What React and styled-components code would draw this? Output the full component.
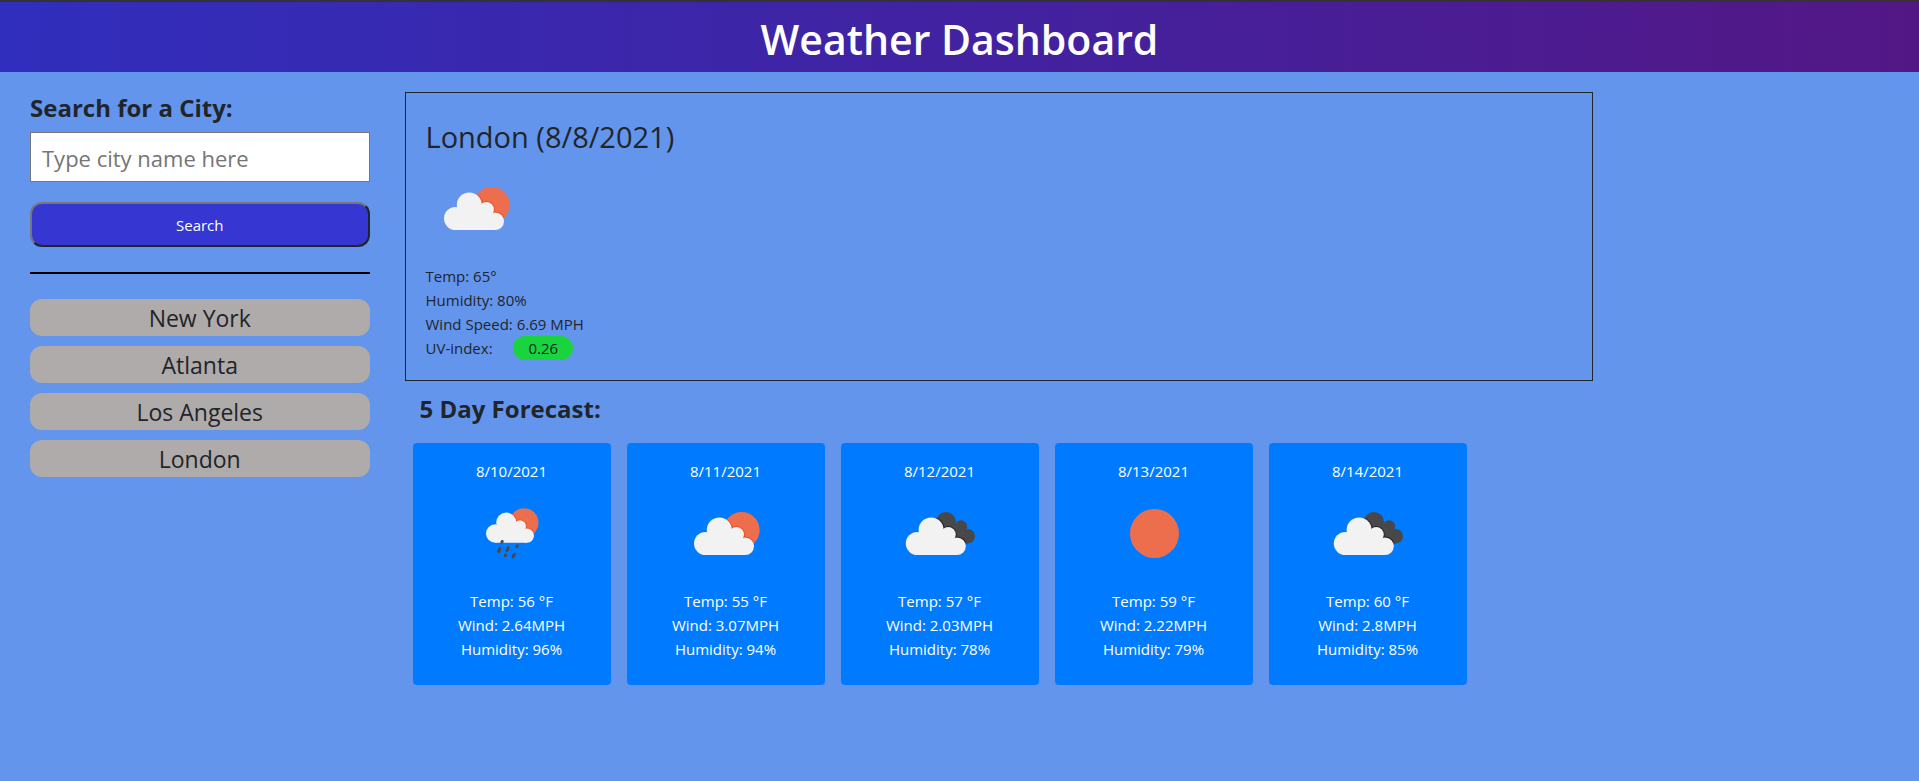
import React from "react";
import styled, { createGlobalStyle } from "styled-components";

const GlobalStyle = createGlobalStyle`
  *, *::before, *::after { box-sizing: border-box; }
  body {
    margin: 0;
    background: #6495ed;
    color: #212529;
    font-family: "Open Sans", "Noto Sans", sans-serif;
    font-size: 15px;
    line-height: 24px;
  }
`;

const Header = styled.header`
  display: flex;
  justify-content: center;
  border-top: 2px solid #333;
  padding: 10px 20px 6px;
  background: linear-gradient(to right, #302ebd, #531785);
`;

const PageTitle = styled.h1`
  margin: 0;
  color: #fff;
  font-size: 41px;
  font-weight: 600;
  line-height: 54px;
`;

const Page = styled.div`
  display: grid;
  grid-template-columns: 2fr 7fr;
  gap: 35px;
  padding: 20px 17% 20px 30px;
`;

const Sidebar = styled.aside`
  display: flex;
  flex-direction: column;
`;

const SearchForm = styled.form`
  display: flex;
  flex-direction: column;
  padding-bottom: 25px;
  border-bottom: 2px solid #000;
`;

const SearchLabel = styled.label`
  margin-bottom: 8px;
  font-size: 24px;
  font-weight: 700;
  line-height: 32px;
`;

const SearchInput = styled.input`
  width: 100%;
  height: 50px;
  margin-bottom: 20px;
  padding: 2px 11px 0;
  border: 1px solid #767676;
  border-radius: 0;
  background: #fff;
  color: #212529;
  font-family: inherit;
  font-size: 22px;
  &::placeholder { color: #757575; opacity: 1; }
`;

const SearchButton = styled.button`
  height: 45px;
  border: 2px solid;
  border-color: #767676 #212529 #212529 #767676;
  border-radius: 12px;
  background: #3636d2;
  color: #fff;
  font-family: inherit;
  font-size: 15px;
  cursor: pointer;
`;

const History = styled.ul`
  display: flex;
  flex-direction: column;
  gap: 10px;
  margin: 25px 0 0;
  padding: 0;
  list-style: none;
`;

const HistoryButton = styled.button`
  display: block;
  width: 100%;
  height: 37px;
  padding: 1px 0 0;
  border: 0;
  border-radius: 12px;
  background: #afabaa;
  color: #212529;
  font-family: inherit;
  font-size: 23px;
  line-height: 34px;
  cursor: pointer;
`;

const Current = styled.section`
  padding: 22px 20px 20px;
  border: 1px solid #212529;
`;

const CityTitle = styled.h2`
  margin: 0;
  font-size: 29px;
  font-weight: 400;
  line-height: 43px;
`;

const Icon = styled.svg`
  display: block;
  width: 100px;
  height: 100px;
  margin-top: 2px;
`;

const Stats = styled.div`
  padding-top: 4px;
`;

const Stat = styled.p`
  margin: 0;
`;

const UvBadge = styled.span`
  display: inline-block;
  margin-left: 17px;
  padding: 0 15px;
  border-radius: 12px;
  background: #19d43f;
`;

const ForecastTitle = styled.h2`
  margin: 12px 0 18px;
  padding-left: 15px;
  font-size: 24px;
  font-weight: 700;
  line-height: 32px;
`;

const Cards = styled.div`
  display: flex;
  flex-wrap: wrap;
  gap: 16px;
  padding-left: 8px;
`;

const Card = styled.article`
  display: flex;
  flex-direction: column;
  align-items: center;
  width: 198px;
  padding: 16px 16px 24px;
  border-radius: 4px;
  background: #007bff;
  color: #fff;
  text-align: center;
`;

function CloudShape(props) {
  return (
    <g {...props}>
      <circle cx="29.5" cy="58.5" r="11.5" />
      <circle cx="43.3" cy="44.9" r="12.5" />
      <circle cx="60.4" cy="49.6" r="7.6" />
      <circle cx="69.2" cy="61.2" r="8.8" />
      <path d="M29.5 49L43 42L60 49L69.2 58V70H29.5Z" />
    </g>
  );
}

function SunCloud({ id }) {
  return (
    <g>
      <clipPath id={id}>
        <circle cx="65.6" cy="45" r="18" />
      </clipPath>
      <circle cx="65.6" cy="45" r="18" fill="#ec6e4c" />
      <g clipPath={`url(#${id})`}>
        <CloudShape fill="#ea4f29" stroke="#ea4f29" strokeWidth="2" />
      </g>
      <CloudShape fill="#f2f2f2" />
    </g>
  );
}

function DarkCloudShape() {
  return (
    <>
      <circle cx="56" cy="37" r="10" />
      <circle cx="71" cy="41.4" r="6.1" />
      <circle cx="77.8" cy="51.2" r="7.2" />
      <path d="M56 37L71 41L78 49V58.4L60 58Z" />
    </>
  );
}

function WeatherIcon({ kind, id }) {
  const clip = `clip-${id}`;
  return (
    <Icon viewBox="0 0 100 100" role="img" aria-label={kind}>
      {kind === "partly cloudy" && <SunCloud id={clip} />}
      {kind === "rain" && (
        <>
          <g transform="translate(9.6 1.7) scale(.8)">
            <SunCloud id={clip} />
          </g>
          <path
            d="M40.2 56.5L39.9 57.2M37.8 63.6L36.6 66.6M46.2 62.7L45.1 65.5M55.2 61L54.9 61.7M43.5 70L43.2 70.7M52.3 69.2L51.3 71.8"
            stroke="#48484a"
            strokeWidth="3"
            strokeLinecap="round"
          />
        </>
      )}
      {kind === "cloudy" && (
        <>
          <clipPath id={clip}>
            <DarkCloudShape />
          </clipPath>
          <g fill="#48484a">
            <DarkCloudShape />
          </g>
          <g clipPath={`url(#${clip})`}>
            <CloudShape transform="translate(-2.2 0)" fill="#222" stroke="#222" strokeWidth="2" />
          </g>
          <CloudShape transform="translate(-2.2 0)" fill="#f2f2f2" />
        </>
      )}
      {kind === "clear" && <circle cx="50.5" cy="48.5" r="24.5" fill="#ec6e4c" />}
    </Icon>
  );
}

const cities = ["New York", "Atlanta", "Los Angeles", "London"];

const forecast = [
  { date: "8/10/2021", kind: "rain", temp: 56, wind: "2.64", humidity: 96 },
  { date: "8/11/2021", kind: "partly cloudy", temp: 55, wind: "3.07", humidity: 94 },
  { date: "8/12/2021", kind: "cloudy", temp: 57, wind: "2.03", humidity: 78 },
  { date: "8/13/2021", kind: "clear", temp: 59, wind: "2.22", humidity: 79 },
  { date: "8/14/2021", kind: "cloudy", temp: 60, wind: "2.8", humidity: 85 },
];

export default function App() {
  return (
    <>
      <GlobalStyle />
      <Header>
        <PageTitle>Weather Dashboard</PageTitle>
      </Header>
      <Page>
        <Sidebar>
          <SearchForm onSubmit={(event) => event.preventDefault()}>
            <SearchLabel htmlFor="city">Search for a City:</SearchLabel>
            <SearchInput id="city" type="text" placeholder="Type city name here" />
            <SearchButton type="submit">Search</SearchButton>
          </SearchForm>
          <History>
            {cities.map((city) => (
              <li key={city}>
                <HistoryButton type="button">{city}</HistoryButton>
              </li>
            ))}
          </History>
        </Sidebar>
        <main>
          <Current>
            <CityTitle>London (8/8/2021)</CityTitle>
            <WeatherIcon kind="partly cloudy" id="current" />
            <Stats>
              <Stat>Temp: 65°</Stat>
              <Stat>Humidity: 80%</Stat>
              <Stat>Wind Speed: 6.69 MPH</Stat>
              <Stat>
                UV-index: <UvBadge>0.26</UvBadge>
              </Stat>
            </Stats>
          </Current>
          <ForecastTitle>5 Day Forecast:</ForecastTitle>
          <Cards>
            {forecast.map((day, index) => (
              <Card key={day.date}>
                <Stat>{day.date}</Stat>
                <WeatherIcon kind={day.kind} id={`day-${index}`} />
                <Stats>
                  <Stat>{`Temp: ${day.temp} °F`}</Stat>
                  <Stat>{`Wind: ${day.wind}MPH`}</Stat>
                  <Stat>{`Humidity: ${day.humidity}%`}</Stat>
                </Stats>
              </Card>
            ))}
          </Cards>
        </main>
      </Page>
    </>
  );
}
